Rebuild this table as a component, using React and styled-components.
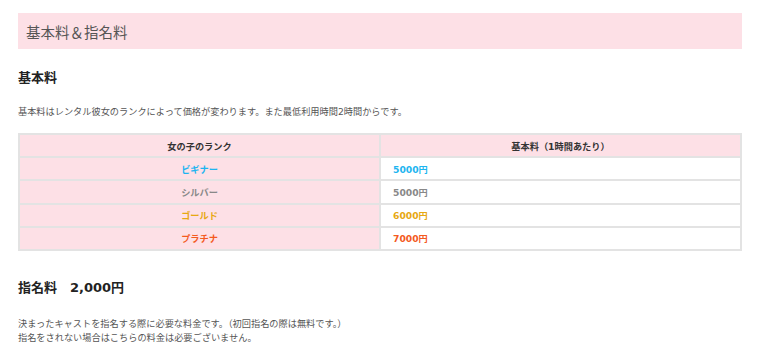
import React from 'react'
import styled, { createGlobalStyle } from 'styled-components'

const GlobalStyle = createGlobalStyle`
    body {
        margin: 0;
        background: #fff;
        font-family: "DejaVu Sans", "Noto Sans CJK JP", sans-serif;
        color: #444;
    }
`

const Page = styled.div`
    width: 724px;
    padding: 13px 18px 0;
`

const Banner = styled.h2`
    margin: 0;
    height: 36px;
    display: flex;
    align-items: center;
    padding-left: 8px;
    background: #fde0e6;
    font-family: "Noto Sans CJK JP", sans-serif;
    font-size: 14.5px;
    font-weight: 400;
    color: #555;
`

const Heading = styled.h3`
    margin: ${p => p.$top}px 0 0;
    height: 20px;
    line-height: 20px;
    font-size: 13px;
    font-weight: 700;
    color: #222;
`

const Text = styled.p`
    margin: ${p => p.$top}px 0 0;
    font-size: 9.2px;
    line-height: 14px;
    color: #555;
`

const Table = styled.table`
    margin-top: 14px;
    width: 100%;
    border-collapse: collapse;
    table-layout: fixed;
    border: 2px solid #e3e3e3;
`

const Cell = styled.td`
    height: 21.2px;
    padding: 0 12px;
    border: 2px solid #e3e3e3;
    font-size: 9.2px;
    font-weight: 700;
    color: ${p => p.$color || '#333'};
    background: ${p => (p.$pink ? '#fde0e6' : '#fff')};
    text-align: ${p => (p.$center ? 'center' : 'left')};
`

const ranks = [
    { name: 'ビギナー', price: '5000円', color: '#1eb5f0' },
    { name: 'シルバー', price: '5000円', color: '#888' },
    { name: 'ゴールド', price: '6000円', color: '#e7a812' },
    { name: 'プラチナ', price: '7000円', color: '#f45a1e' },
]

const App = () => (
    <Page>
        <GlobalStyle />
        <Banner>基本料＆指名料</Banner>

        <Heading $top={19}>基本料</Heading>
        <Text $top={17}>基本料はレンタル彼女のランクによって価格が変わります。また最低利用時間2時間からです。</Text>

        <Table>
            <thead>
                <tr>
                    <Cell as="th" $pink $center>女の子のランク</Cell>
                    <Cell as="th" $pink $center>基本料（1時間あたり）</Cell>
                </tr>
            </thead>
            <tbody>
                {ranks.map(r => (
                    <tr key={r.name}>
                        <Cell $pink $center $color={r.color}>{r.name}</Cell>
                        <Cell $color={r.color}>{r.price}</Cell>
                    </tr>
                ))}
            </tbody>
        </Table>

        <Heading $top={27}>指名料　2,000円</Heading>
        <Text $top={19}>
            決まったキャストを指名する際に必要な料金です。（初回指名の際は無料です。）<br />
            指名をされない場合はこちらの料金は必要ございません。
        </Text>
    </Page>
)

export default App
